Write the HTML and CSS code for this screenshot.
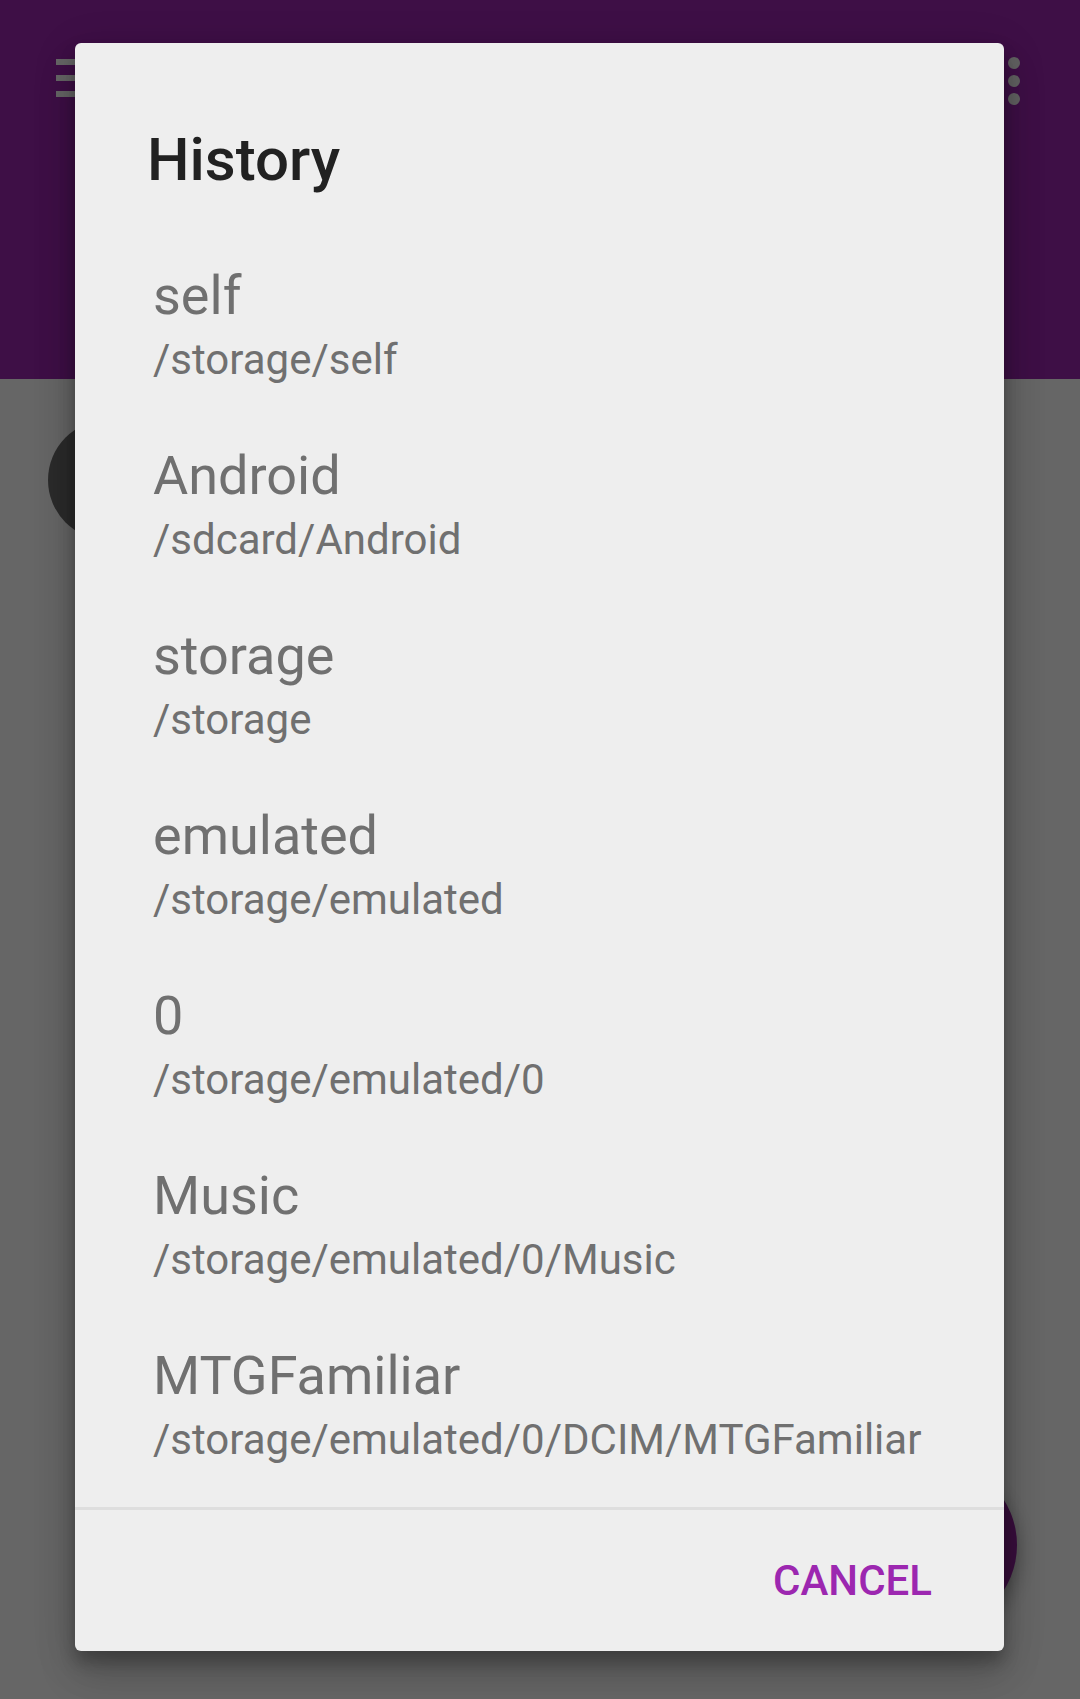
FILE: index.html
```html
<!DOCTYPE html>
<html>
<head>
<meta charset="utf-8">
<link rel="stylesheet" href="styles.css">
</head>
<body>
<div class="screen">
  <header class="appbar">
    <div class="hamburger"><span></span><span></span><span></span></div>
    <div class="overflow"><span></span><span></span><span></span></div>
  </header>
  <main class="content">
    <div class="avatar"></div>
  </main>
  <div class="fab"></div>
  <div class="scrim"></div>
  <div class="dialog">
    <h1 class="dialog-title">History</h1>
    <ul class="history">
      <li class="item"><div class="name">self</div><div class="path">/storage/self</div></li>
      <li class="item"><div class="name">Android</div><div class="path">/sdcard/Android</div></li>
      <li class="item"><div class="name">storage</div><div class="path">/storage</div></li>
      <li class="item"><div class="name">emulated</div><div class="path">/storage/emulated</div></li>
      <li class="item"><div class="name">0</div><div class="path">/storage/emulated/0</div></li>
      <li class="item"><div class="name">Music</div><div class="path">/storage/emulated/0/Music</div></li>
      <li class="item"><div class="name">MTGFamiliar</div><div class="path">/storage/emulated/0/DCIM/MTGFamiliar</div></li>
    </ul>
    <div class="actions">
      <button class="btn">CANCEL</button>
    </div>
  </div>
</div>
</body>
</html>
```

FILE: styles.css
```css
* { box-sizing: border-box; }
html, body {
  margin: 0;
  padding: 0;
}
body {
  width: 1080px;
  height: 1699px;
  overflow: hidden;
  font-family: Roboto, "Liberation Sans", sans-serif;
  background: #ffffff;
}
.screen {
  position: relative;
  width: 1080px;
  height: 1699px;
  display: flex;
  flex-direction: column;
}
.appbar {
  height: 379px;
  background: #9c27b0;
  display: flex;
  justify-content: space-between;
  align-items: flex-start;
  padding: 59px 60px 0 56px;
}
.hamburger {
  display: flex;
  flex-direction: column;
  gap: 10px;
}
.hamburger span {
  display: block;
  width: 54px;
  height: 6px;
  background: #ffffff;
}
.overflow {
  display: flex;
  flex-direction: column;
  gap: 6px;
  margin-top: -2px;
}
.overflow span {
  display: block;
  width: 12px;
  height: 12px;
  border-radius: 50%;
  background: #f5f5f5;
}
.content {
  flex: 1;
  background: #ffffff;
  padding: 41px 0 0 48px;
}
.avatar {
  width: 120px;
  height: 120px;
  border-radius: 50%;
  background: #6c6c6c;
}
.fab {
  position: absolute;
  left: 849px;
  top: 1461px;
  width: 168px;
  height: 168px;
  border-radius: 50%;
  background: #8e2499;
  box-shadow: 0 8px 20px rgba(0,0,0,0.35);
}
.scrim {
  position: absolute;
  inset: 0;
  background: rgba(0,0,0,0.6);
}
.dialog {
  position: absolute;
  left: 75px;
  top: 43px;
  width: 929px;
  height: 1608px;
  background: #eeeeee;
  border-radius: 6px;
  box-shadow: 0 24px 38px rgba(0,0,0,0.16), 0 9px 46px rgba(0,0,0,0.14), 0 11px 15px rgba(0,0,0,0.22);
  display: flex;
  flex-direction: column;
}
.dialog-title {
  margin: 0;
  padding: 80px 0 0 72px;
  height: 154px;
  font-size: 60px;
  line-height: 74px;
  font-weight: 500;
  color: #212121;
}
.history {
  list-style: none;
  margin: 0;
  padding: 43px 0 0 0;
  flex: 1;
}
.item {
  padding: 26px 0 26px 78px;
}
.name {
  font-size: 54px;
  line-height: 60px;
  color: #707070;
}
.path {
  font-size: 42px;
  line-height: 68px;
  color: #707070;
}
.actions {
  border-top: 3px solid #dedede;
  height: 144px;
  display: flex;
  justify-content: flex-end;
  align-items: flex-start;
  padding: 47px 72px 0 0;
}
.btn {
  border: 0;
  background: none;
  padding: 0;
  font-family: Roboto, "Liberation Sans", sans-serif;
  font-size: 42px;
  line-height: 48px;
  font-weight: 500;
  color: #9c27b0;
}
```
